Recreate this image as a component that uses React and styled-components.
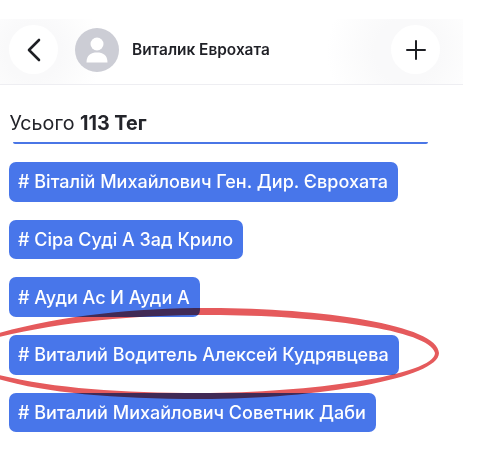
import React from 'react';
import styled, { createGlobalStyle } from 'styled-components';

const GlobalStyle = createGlobalStyle`
  html, body {
    margin: 0;
    padding: 0;
    background: #fff;
    font-family: Inter, "Liberation Sans", sans-serif;
  }
`;

const Page = styled.div`
  position: relative;
  width: 504px;
  height: 466px;
  overflow: hidden;
  background: #fff;
  padding-top: 19px;
  box-sizing: border-box;
`;

const Screen = styled.div`
  width: 463px;
`;

const Header = styled.header`
  height: 65px;
  display: flex;
  align-items: center;
  padding: 0 23px 0 9px;
  border-bottom: 1px solid #eeeef2;
  background:
    radial-gradient(circle 70px at 33px 32px, #f9f9fa 40%, rgba(255, 255, 255, 0) 100%),
    radial-gradient(circle 80px at 407px 32px, #f9f9fa 40%, rgba(255, 255, 255, 0) 100%);
`;

const RoundButton = styled.button`
  width: 49px;
  height: 49px;
  flex: none;
  border: 0;
  padding: 0;
  border-radius: 50%;
  background: #fff;
  display: flex;
  align-items: center;
  justify-content: center;
  margin-top: -4px;
  margin-left: ${({ $push }) => ($push ? 'auto' : '0')};
`;

const Avatar = styled.div`
  width: 44px;
  height: 44px;
  flex: none;
  margin: -4px 13px 0 17px;
  border-radius: 50%;
  background: #cccdd5;
  display: flex;
  align-items: center;
  justify-content: center;
`;

const Name = styled.span`
  margin-top: -4px;
  font-size: 15.4px;
  font-weight: 580;
  color: #1f2026;
`;

const Total = styled.div`
  margin: 26px 0 0 9.5px;
  font-size: 19.7px;
  line-height: 24px;
  color: #23242a;

  b {
    font-weight: 700;
  }
`;

const Underline = styled.div`
  height: 2px;
  margin: 7px 35px 0 13px;
  border-radius: 0 0 3px 3px;
  background: #4a76e6;
`;

const TagList = styled.div`
  display: flex;
  flex-direction: column;
  align-items: flex-start;
  gap: 18px;
  margin: 18px 0 0 9px;
`;

const Tag = styled.div`
  height: 39.7px;
  display: flex;
  align-items: center;
  padding: 0 10px 0 9px;
  border-radius: 7px;
  background: #4876ea;
  color: #fff;
  font-size: 18px;
  font-weight: 550;
  white-space: nowrap;
`;

const Scribble = styled.svg`
  position: absolute;
  left: 0;
  top: 0;
  mix-blend-mode: multiply;
  pointer-events: none;
`;

const tags = [
  '# Віталій Михайлович Ген. Дир. Єврохата',
  '# Сіра Суді А Зад Крило',
  '# Ауди Ас И Ауди А',
  '# Виталий Водитель Алексей Кудрявцева',
  '# Виталий Михайлович Советник Даби',
];

export default function App() {
  return (
    <Page>
      <GlobalStyle />
      <Screen>
        <Header>
          <RoundButton aria-label="back">
            <svg width="16" height="24" viewBox="0 0 16 24" fill="none" stroke="#1e1f24" strokeWidth="2.6" strokeLinecap="round" strokeLinejoin="round">
              <path d="M13 2 L3 12 L13 22" />
            </svg>
          </RoundButton>
          <Avatar>
            <svg width="22" height="26" viewBox="0 0 22 26" fill="#fff">
              <circle cx="11" cy="7" r="6.5" />
              <path d="M0.5 25.5 C0.5 18 5 15.5 11 15.5 C17 15.5 21.5 18 21.5 25.5 Z" />
            </svg>
          </Avatar>
          <Name>Виталик Еврохата</Name>
          <RoundButton $push aria-label="add">
            <svg width="20" height="20" viewBox="0 0 20 20" fill="none" stroke="#1e1f24" strokeWidth="2" strokeLinecap="round">
              <path d="M10 1 V19 M1 10 H19" />
            </svg>
          </RoundButton>
        </Header>
        <Total>
          Усього <b>113 Тег</b>
        </Total>
        <Underline />
        <TagList>
          {tags.map((tag) => (
            <Tag key={tag}>{tag}</Tag>
          ))}
        </TagList>
      </Screen>
      <Scribble width="504" height="466" viewBox="0 0 504 466">
        <path
          fill="#e55a5c"
          fillRule="evenodd"
          d="M-5 334 C60 316 130 308 210 308 C320 308 439 325 439 353 C439 378 320 399 200 399 C110 399 40 392 -5 378 L-5 374 C50 388 120 393 200 393 C310 393 435 375 435 353 C430 330 320 315 210 315 C130 315 60 322 -5 338 Z"
        />
      </Scribble>
    </Page>
  );
}
